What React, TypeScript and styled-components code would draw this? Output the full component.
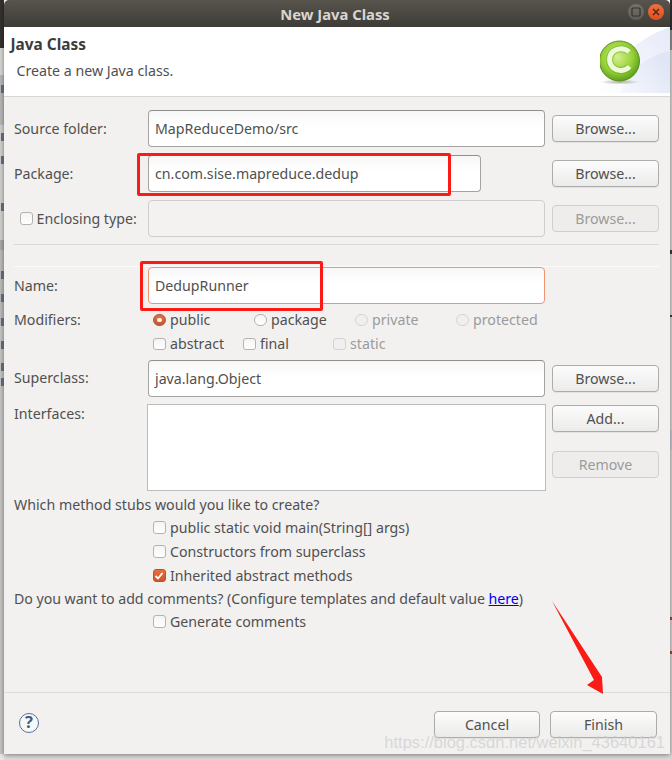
import React from "react"
import styled, { createGlobalStyle, css } from "styled-components"

const GlobalStyle = createGlobalStyle`
  html, body { margin: 0; padding: 0; background: #8e8e8c; }
  #root { width: 672px; height: 760px; }
`

const FONT = `"Noto Sans", "Open Sans", sans-serif`
const TEXT = "#505050"
const MUTED = "#9b9b9b"

const Desktop = styled.div`
  position: relative;
  width: 672px;
  height: 760px;
  overflow: hidden;
  font-family: ${FONT};
  font-size: 14.2px;
  color: ${TEXT};
  background-color: #dcdcda;
  background-image:
    linear-gradient(#33322e 0 48px, #d8d8d6 48px 75px, #b9b9b7 75px 125px, #d2d2d0 125px 240px, #a9a9a7 240px 250px, #bcbcba 250px 325px, #c6c6c4 325px 754px, #e6e6e4 754px),
    linear-gradient(#33322e 0 30px, #8f8f8d 30px 50px, #d7d7d5 50px 250px, #3a3a38 250px 254px, #d7d7d5 254px 315px, #3a3a38 315px 317px, #d7d7d5 317px 430px, #c5cbd8 430px 450px, #d7d7d5 450px 617px, #b5411a 617px 620px, #d7d7d5 620px 651px, #b5411a 651px 654px, #d7d7d5 654px);
  background-size: 4px 100%, 2px 100%;
  background-position: left top, right top;
  background-repeat: no-repeat;
`

// slivers of the window behind the dialog, only their last pixels are visible
const BehindSliver = styled.span<{ $y: number }>`
  position: absolute;
  left: 1px;
  top: ${(p) => p.$y - 4}px;
  width: 3px;
  height: 8px;
  background: #5a6478;
`

const Dialog = styled.div`
  display: flex;
  flex-direction: column;
  width: 666px;
  height: 754px;
  margin-left: 4px;
  background: #f2f1f0;
  box-shadow: 0 1px 5px rgba(0, 0, 0, 0.45);
`

const TitleBar = styled.div`
  position: relative;
  display: flex;
  align-items: center;
  justify-content: center;
  flex: none;
  height: 27px;
  padding-right: 4px;
  background: linear-gradient(#57544c, #3d3c37);
  border-radius: 5px 5px 0 0;
  color: #d9d5cf;
  font-size: 14.8px;
  font-weight: 700;
`

const WindowButtons = styled.div`
  position: absolute;
  right: 6px;
  top: 4px;
  display: flex;
  gap: 4px;
`

const WindowButton = styled.span<{ $close?: boolean }>`
  display: flex;
  align-items: center;
  justify-content: center;
  width: 16px;
  height: 16px;
  border-radius: 50%;
  background: ${(p) => (p.$close ? "linear-gradient(#f0703f, #dd4f1c)" : "linear-gradient(#74726c, #5e5c56)")};
`

const Banner = styled.div`
  display: flex;
  flex: none;
  justify-content: space-between;
  height: 69px;
  background: #fff;
  border-bottom: 1px solid #d9d7d5;
`

const BannerText = styled.div`
  display: flex;
  flex-direction: column;
  padding: 8px 0 0 6.5px;
`

const BannerTitle = styled.div`
  height: 20px;
  line-height: 20px;
  color: #3c3c3c;
  font-size: 15.4px;
  font-weight: 700;
`

const BannerSubtitle = styled.div`
  height: 20px;
  margin: 6px 0 0 6px;
  line-height: 20px;
`

const Content = styled.div`
  display: flex;
  flex-direction: column;
  flex: 1;
  padding: 13px 11px 0 10px;
`

const FormGrid = styled.div`
  display: grid;
  grid-template-columns: 127px 397px 107px;
  column-gap: 7px;
  grid-auto-rows: 37px;
  row-gap: 8px;
  align-items: center;
`

const Label = styled.div<{ $top?: boolean }>`
  line-height: 20px;
  white-space: nowrap;
  ${(p) => p.$top && css`align-self: start;`}
`

const Field = styled.div<{ $state?: "disabled" | "error"; $width?: number }>`
  box-sizing: border-box;
  height: 37px;
  width: ${(p) => (p.$width ? `${p.$width}px` : "100%")};
  padding: 0 6px;
  line-height: 35px;
  border: 1px solid #a3a3a1;
  border-top-color: #8f8f8d;
  border-radius: 4px;
  background: linear-gradient(#f7f7f7, #fff 45%);
  white-space: nowrap;
  ${(p) =>
    p.$state === "disabled" &&
    css`
      border-color: #cfcecc;
      background: #f3f2f1;
    `}
  ${(p) =>
    p.$state === "error" &&
    css`
      border-color: #ee9470;
    `}
`

const Button = styled.div<{ $disabled?: boolean; $width?: number }>`
  box-sizing: border-box;
  width: ${(p) => p.$width ?? 107}px;
  height: 27px;
  line-height: 25px;
  text-align: center;
  border: 1px solid #acacaa;
  border-radius: 4px;
  background: linear-gradient(#fcfcfc, #ebebea);
  box-shadow: 0 1px 0 rgba(0, 0, 0, 0.06);
  ${(p) =>
    p.$disabled &&
    css`
      color: ${MUTED};
      border-color: #d0cfcd;
      background: #eeedec;
      box-shadow: none;
    `}
`

const EnclosingLabel = styled.div`
  display: flex;
  align-items: center;
  gap: 4px;
  padding-left: 6px;
  white-space: nowrap;
`

const Dividers = styled.div`
  flex: none;
  height: 23px;
  margin-top: 7px;
  box-sizing: border-box;
  border-top: 1px solid #d9d8d6;
  border-bottom: 1px solid #fbfbfa;
`

const OptionRow = styled.div<{ $step: number }>`
  display: grid;
  grid-template-columns: repeat(4, ${(p) => p.$step}px);
  align-items: center;
  height: 24px;
  padding-left: 5px;
`

const Option = styled.label<{ $disabled?: boolean }>`
  display: flex;
  align-items: center;
  gap: 4.5px;
  line-height: 20px;
  white-space: nowrap;
  ${(p) => p.$disabled && css`color: ${MUTED};`}
`

const Box = styled.span<{ $checked?: boolean; $disabled?: boolean }>`
  display: flex;
  align-items: center;
  justify-content: center;
  flex: none;
  box-sizing: border-box;
  width: 12.5px;
  height: 12.5px;
  border: 1px solid ${(p) => (p.$disabled ? "#d5d4d2" : "#b4b3b1")};
  border-radius: 3px;
  background: ${(p) => (p.$checked ? "linear-gradient(#e9703f, #c9552b)" : p.$disabled ? "#f0efee" : "linear-gradient(#f4f4f4, #fff)")};
  ${(p) => p.$checked && css`border-color: #b9532c;`}
`

const Radio = styled(Box)`
  border-radius: 50%;
  ${(p) =>
    p.$checked &&
    css`
      &::after {
        content: "";
        width: 4.5px;
        height: 4.5px;
        border-radius: 50%;
        background: #fff;
      }
    `}
`

const Modifiers = styled.div`
  display: grid;
  grid-template-columns: 134px 1fr;
  margin-top: 4px;
`

const ModifiersLabel = styled(Label)`
  margin-top: 2px;
`

const ListBox = styled.div`
  box-sizing: border-box;
  width: 399px;
  height: 87px;
  margin-left: -1px;
  background: #fff;
  border: 1px solid #bdbcba;
`

const ButtonStack = styled.div`
  display: flex;
  flex-direction: column;
  gap: 19px;
  margin-top: 1px;
`

const InterfacesRow = styled(FormGrid)`
  height: 87px;
  align-items: start;
  margin-top: 7px;
`

const SuperclassRow = styled(FormGrid)`
  margin-top: 3.5px;
`

const Prompt = styled.div<{ $gap: number; $tight?: boolean }>`
  height: 20px;
  line-height: 20px;
  margin-top: ${(p) => p.$gap}px;
  white-space: nowrap;
  ${(p) => p.$tight && css`letter-spacing: -0.05px;`}
`

const CheckList = styled.div`
  display: flex;
  flex-direction: column;
  margin-top: 1px;
  padding-left: 139px;
`

const CheckRow = styled.div`
  height: 24px;
  display: flex;
  align-items: center;
`

const HereLink = styled.a`
  color: #0000ee;
  text-decoration: underline;
`

const Footer = styled.div`
  display: flex;
  flex: none;
  align-items: flex-start;
  height: 62px;
  box-sizing: border-box;
  padding: 18px 13px 0 15px;
  border-top: 1px solid #dddcda;
  gap: 10px;
`

const HelpIcon = styled.span`
  display: flex;
  align-items: center;
  justify-content: center;
  box-sizing: border-box;
  width: 20px;
  height: 20px;
  margin-top: 1.5px;
  margin-right: auto;
  border: 1.2px solid #54719b;
  border-radius: 50%;
  background: #f8f8f8;
  color: #44597e;
  font-size: 16.5px;
  font-weight: 700;
  line-height: 1;
`

const AnnotationBox = styled.div<{ $x: number; $y: number; $w: number; $h: number }>`
  position: absolute;
  left: ${(p) => p.$x}px;
  top: ${(p) => p.$y}px;
  width: ${(p) => p.$w}px;
  height: ${(p) => p.$h}px;
  box-sizing: border-box;
  border: 3px solid #fa1a16;
  border-radius: 2px;
`

const Arrow = styled.svg`
  position: absolute;
  left: 545px;
  top: 595px;
`

const Watermark = styled.div`
  position: absolute;
  right: 7px;
  bottom: 8px;
  color: rgba(205, 205, 205, 0.72);
  font-family: "Liberation Sans", Arial, sans-serif;
  font-size: 16.5px;
  white-space: nowrap;
`

const ClassLogo = () => (
  <svg width="70" height="66" viewBox="0 0 70 66">
    <defs>
      <linearGradient id="corner" x1="0" y1="1" x2="1" y2="0">
        <stop offset="0" stopColor="#ffffff" />
        <stop offset="1" stopColor="#e6eaf8" />
      </linearGradient>
      <linearGradient id="band" x1="0" y1="1" x2="1" y2="0.3">
        <stop offset="0" stopColor="#f6f8fd" />
        <stop offset="1" stopColor="#dfe5f6" />
      </linearGradient>
      <radialGradient id="ball" cx="0.45" cy="0.4" r="0.65">
        <stop offset="0" stopColor="#d4ef8c" />
        <stop offset="0.6" stopColor="#94d034" />
        <stop offset="1" stopColor="#4f9416" />
      </radialGradient>
      <radialGradient id="ground" cx="0.5" cy="0.5" r="0.5">
        <stop offset="0" stopColor="#8a9077" stopOpacity="0.7" />
        <stop offset="1" stopColor="#8a9077" stopOpacity="0" />
      </radialGradient>
    </defs>
    <path d="M0 66 C10 36 36 12 70 0 V66 Z" fill="url(#corner)" />
    <path d="M20 66 C28 44 48 28 70 24 V66 Z" fill="url(#band)" />
    <ellipse cx="20" cy="55" rx="20" ry="2.5" fill="url(#ground)" />
    <circle cx="19.5" cy="34" r="20" fill="url(#ball)" stroke="#5f8f26" strokeWidth="1" />
    <path
      d="M29.5 39.5 C26 44 18.5 45 13.5 41 C8 36.5 8.5 28 13.5 24 C18.5 20.5 25.5 21 29 25"
      fill="none"
      stroke="#5f9a1e"
      strokeWidth="7"
      opacity="0.45"
    />
    <path
      d="M29.5 39.5 C26 44 18.5 45 13.5 41 C8 36.5 8.5 28 13.5 24 C18.5 20.5 25.5 21 29 25"
      fill="none"
      stroke="#edfad8"
      strokeWidth="5"
    />
  </svg>
)

const sliverRows = [89, 137, 160, 207, 275, 298, 322, 345, 367, 382]

const App = () => (
  <>
    <GlobalStyle />
    <Desktop>
      {sliverRows.map((y) => (
        <BehindSliver key={y} $y={y} />
      ))}
      <Dialog>
        <TitleBar>
          New Java Class
          <WindowButtons>
            <WindowButton>
              <svg width="10" height="10" viewBox="0 0 10 10">
                <rect x="1" y="1" width="8" height="8" rx="1" fill="none" stroke="#33322e" strokeWidth="1.2" />
              </svg>
            </WindowButton>
            <WindowButton $close>
              <svg width="10" height="10" viewBox="0 0 10 10">
                <path d="M2 2 L8 8 M8 2 L2 8" stroke="#4a2413" strokeWidth="1.4" />
              </svg>
            </WindowButton>
          </WindowButtons>
        </TitleBar>
        <Banner>
          <BannerText>
            <BannerTitle>Java Class</BannerTitle>
            <BannerSubtitle>Create a new Java class.</BannerSubtitle>
          </BannerText>
          <ClassLogo />
        </Banner>
        <Content>
          <FormGrid>
            <Label>Source folder:</Label>
            <Field>MapReduceDemo/src</Field>
            <Button>Browse...</Button>
            <Label>Package:</Label>
            <Field $width={333}>cn.com.sise.mapreduce.dedup</Field>
            <Button>Browse...</Button>
            <EnclosingLabel>
              <Box />
              Enclosing type:
            </EnclosingLabel>
            <Field $state="disabled" />
            <Button $disabled>Browse...</Button>
          </FormGrid>
          <Dividers />
          <FormGrid>
            <Label>Name:</Label>
            <Field $state="error">DedupRunner</Field>
          </FormGrid>
          <Modifiers>
            <ModifiersLabel>Modifiers:</ModifiersLabel>
            <div>
              <OptionRow $step={101}>
                <Option>
                  <Radio $checked />
                  public
                </Option>
                <Option>
                  <Radio />
                  package
                </Option>
                <Option $disabled>
                  <Radio $disabled />
                  private
                </Option>
                <Option $disabled>
                  <Radio $disabled />
                  protected
                </Option>
              </OptionRow>
              <OptionRow $step={90}>
                <Option>
                  <Box />
                  abstract
                </Option>
                <Option>
                  <Box />
                  final
                </Option>
                <Option $disabled>
                  <Box $disabled />
                  static
                </Option>
              </OptionRow>
            </div>
          </Modifiers>
          <SuperclassRow>
            <Label>Superclass:</Label>
            <Field>java.lang.Object</Field>
            <Button>Browse...</Button>
          </SuperclassRow>
          <InterfacesRow>
            <Label $top>Interfaces:</Label>
            <ListBox />
            <ButtonStack>
              <Button>Add...</Button>
              <Button $disabled>Remove</Button>
            </ButtonStack>
          </InterfacesRow>
          <Prompt $gap={4}>Which method stubs would you like to create?</Prompt>
          <CheckList>
            <CheckRow>
              <Option>
                <Box />
                public static void main(String[] args)
              </Option>
            </CheckRow>
            <CheckRow>
              <Option>
                <Box />
                Constructors from superclass
              </Option>
            </CheckRow>
            <CheckRow>
              <Option>
                <Box $checked>
                  <svg width="10" height="10" viewBox="0 0 10 10">
                    <path d="M1.5 5 L4 7.5 L8.5 2" fill="none" stroke="#fff" strokeWidth="1.8" />
                  </svg>
                </Box>
                Inherited abstract methods
              </Option>
            </CheckRow>
          </CheckList>
          <Prompt $gap={1} $tight>
            Do you want to add comments? (Configure templates and default value <HereLink>here</HereLink>)
          </Prompt>
          <CheckList>
            <CheckRow>
              <Option>
                <Box />
                Generate comments
              </Option>
            </CheckRow>
          </CheckList>
        </Content>
        <Footer>
          <HelpIcon>?</HelpIcon>
          <Button $width={106}>Cancel</Button>
          <Button>Finish</Button>
        </Footer>
      </Dialog>
      <AnnotationBox $x={137} $y={153} $w={314} $h={43} />
      <AnnotationBox $x={140} $y={261} $w={183} $h={50} />
      <Arrow width="62" height="104" viewBox="0 0 62 104">
        <polygon points="7,6 57,82 58,99 42,90 49,85" fill="#fa1a16" />
      </Arrow>
      <Watermark>https://blog.csdn.net/weixin_43640161</Watermark>
    </Desktop>
  </>
)

export default App
